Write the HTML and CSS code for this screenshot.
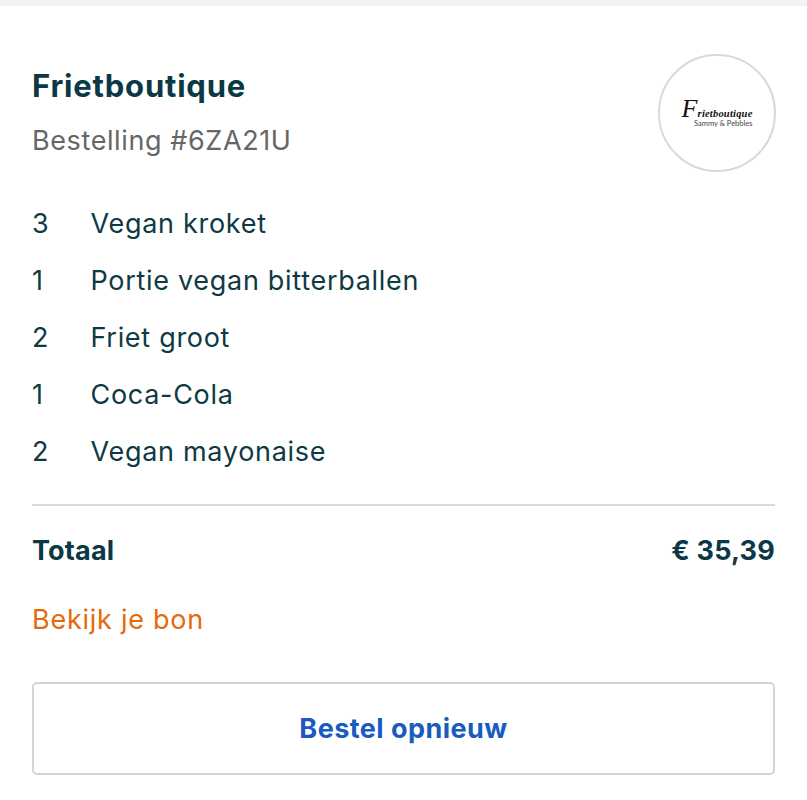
FILE: index.html
```
<!DOCTYPE html>
<html lang="nl">
<head>
<meta charset="utf-8">
<title>Frietboutique</title>
<link rel="stylesheet" href="styles.css">
</head>
<body>
<div class="topbar"></div>
<main class="card">
  <header class="head">
    <div class="titles">
      <h1 class="name">Frietboutique</h1>
      <p class="order">Bestelling #6ZA21U</p>
    </div>
    <div class="logo">
      <div class="logo-inner">
        <span class="logo-script"><span class="logo-f">F</span>rietboutique</span>
        <span class="logo-sub">Sammy &amp; Pebbles</span>
      </div>
    </div>
  </header>
  <ul class="items">
    <li class="item"><span class="qty">3</span><span>Vegan kroket</span></li>
    <li class="item"><span class="qty">1</span><span>Portie vegan bitterballen</span></li>
    <li class="item"><span class="qty">2</span><span>Friet groot</span></li>
    <li class="item"><span class="qty">1</span><span>Coca-Cola</span></li>
    <li class="item"><span class="qty">2</span><span>Vegan mayonaise</span></li>
  </ul>
  <div class="total"><span>Totaal</span><span>€ 35,39</span></div>
  <a class="receipt" href="#">Bekijk je bon</a>
  <button class="again" type="button">Bestel opnieuw</button>
</main>
</body>
</html>
```
FILE: styles.css
```
* { box-sizing: border-box; }
html, body { margin: 0; padding: 0; }
body {
  background: #fff;
  font-family: Inter, "Noto Sans", sans-serif;
  color: #0f3a44;
  width: 807px;
  height: 800px;
  overflow: hidden;
}
.topbar { height: 6px; background: #f2f2f2; }
.card { padding: 48px 32px 0 32px; display: flex; flex-direction: column; }
.head { display: flex; justify-content: space-between; align-items: flex-start; height: 141px; }
.titles { padding-top: 12px; }
.name { margin: 0; font-size: 31px; line-height: 40px; font-weight: 700; letter-spacing: 0.8px; color: #0b3845; }
.order { margin: 17px 0 0; font-size: 27px; line-height: 36px; letter-spacing: 0.6px; color: #666; }
.logo {
  width: 118px; height: 118px; margin-right: -1px; border: 2px solid #d9d9d9; border-radius: 50%;
  display: flex; align-items: center; justify-content: center;
}
.logo-inner { display: flex; flex-direction: column; align-items: flex-end; color: #111; padding-top: 4px; }
.logo-script { font-family: "Liberation Serif", serif; font-style: italic; font-weight: 700; font-size: 10.5px; line-height: 12px; letter-spacing: 0.2px; }
.logo-f { font-size: 26px; line-height: 12px; font-weight: 400; }
.logo-sub { font-family: Lato, sans-serif; font-size: 7.5px; line-height: 8px; color: #444; }
.items { list-style: none; margin: 0; padding: 0; border-bottom: 2px solid #d9d9d9; padding-bottom: 24px; }
.item { display: flex; height: 57px; align-items: center; font-size: 27px; line-height: 36px; letter-spacing: 0.7px; color: #0f3a44; }
.qty { width: 58.5px; }
.total { display: flex; justify-content: space-between; font-size: 27px; line-height: 36px; font-weight: 700; letter-spacing: 0.2px; color: #0b3845; margin-top: 27px; }
.receipt { display: block; margin-top: 33px; font-size: 27px; line-height: 36px; letter-spacing: 0.75px; color: #e56a0a; text-decoration: none; }
.again {
  margin-top: 44px; height: 93px; width: 100%; background: #fff; border: 2px solid #d5d5d5; border-radius: 5px;
  font-family: Inter, sans-serif; font-size: 27px; font-weight: 700; letter-spacing: 0.45px; color: #1a5bbf;
}
```
